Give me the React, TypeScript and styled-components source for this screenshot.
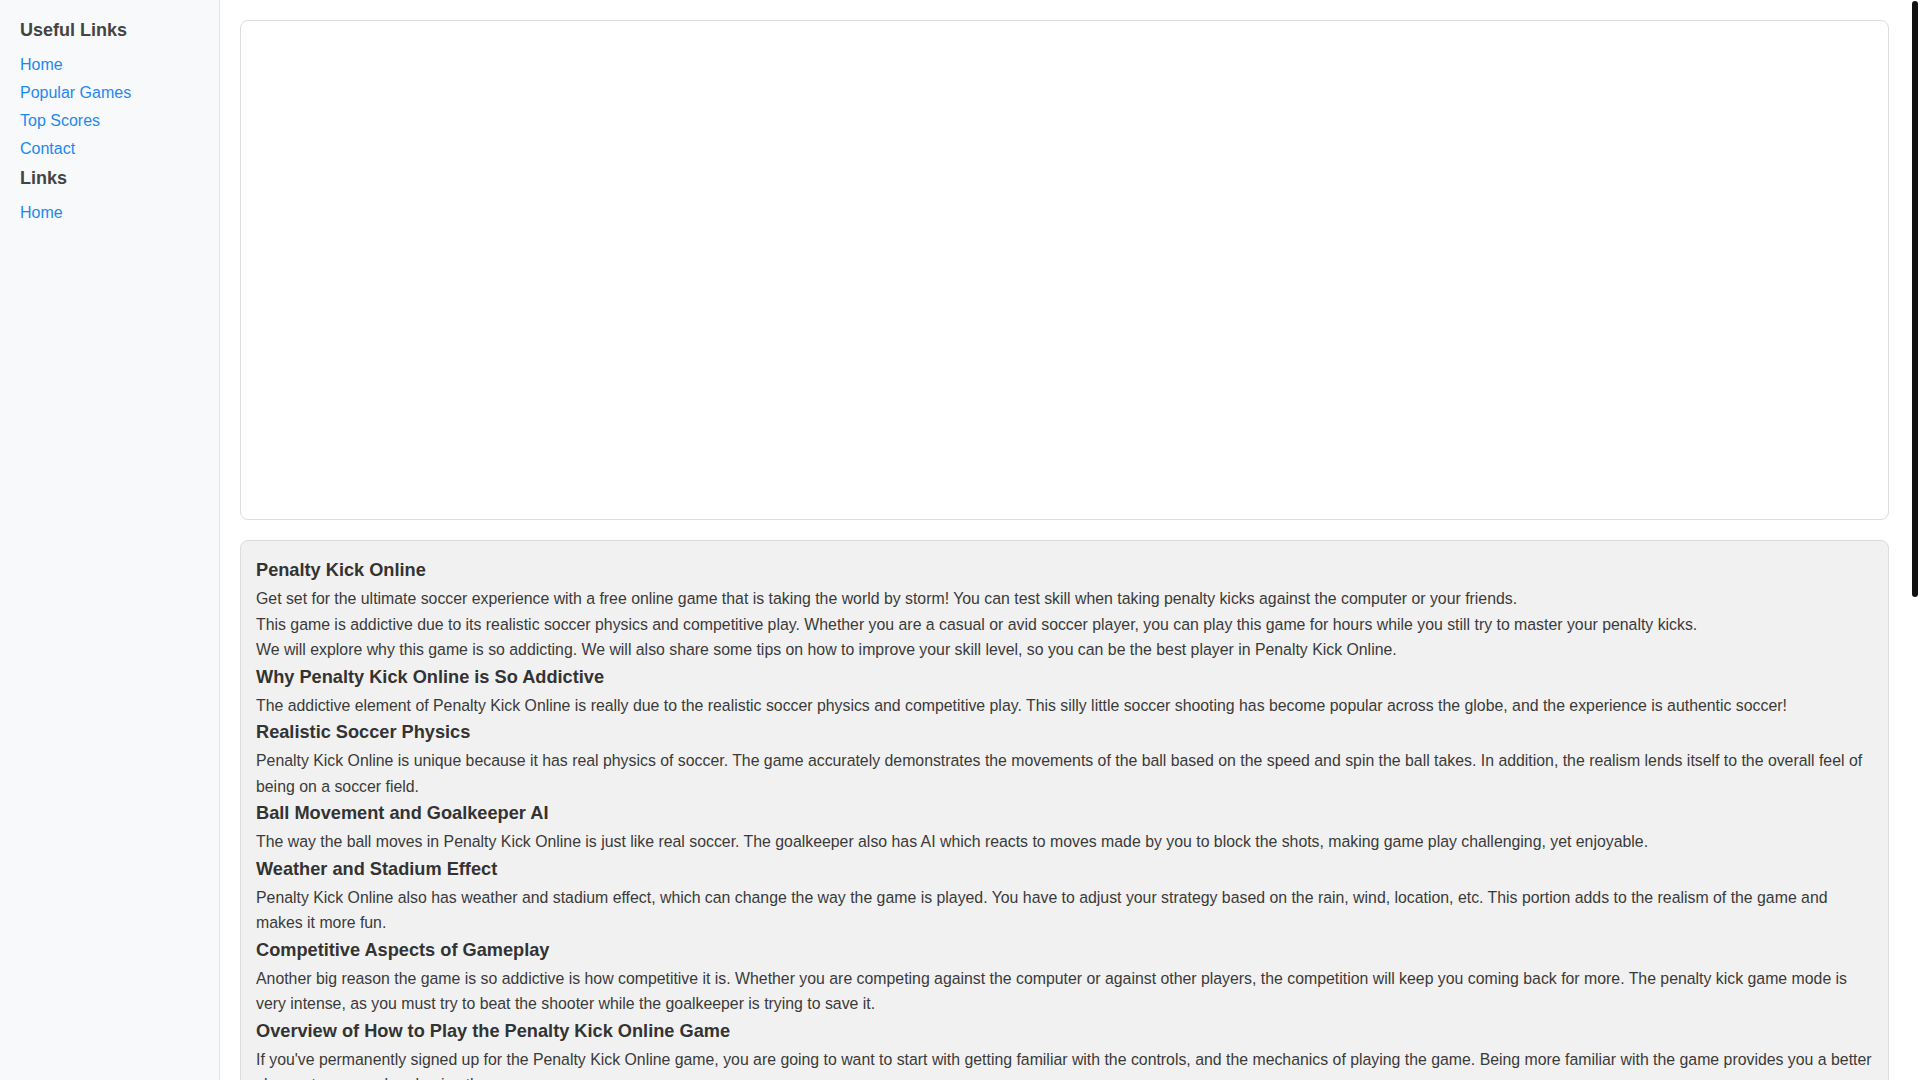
import React from "react";
import styled, { createGlobalStyle } from "styled-components";

const GlobalStyle = createGlobalStyle`
  * { box-sizing: border-box; }
  html, body { margin: 0; padding: 0; }
  body {
    font-family: "Liberation Sans", Arial, Helvetica, sans-serif;
    font-size: 16px;
    line-height: 1.6;
    color: #333;
    background: #fff;
  }
`;

const Layout = styled.div`
  display: flex;
  align-items: stretch;
  min-height: 100vh;
  padding-right: 15px;
`;

const ScrollThumb = styled.div`
  position: fixed;
  top: 1px;
  right: 2px;
  width: 6px;
  height: 596px;
  border-radius: 3px;
  background: #111111;
  z-index: 10;
`;

const Sidebar = styled.aside`
  flex: 0 0 220px;
  width: 220px;
  background: #f8f9fa;
  border-right: 1px solid #e3e3e3;
  padding: 19px 20px 18px;
`;

const SideHeading = styled.h5`
  margin: 0 0 10px;
  font-size: 18px;
  line-height: 22px;
  font-weight: 700;
  color: #444;
`;

const LinkList = styled.ul`
  list-style: none;
  margin: 0 0 4px;
  padding: 0;
`;

const LinkItem = styled.li`
  height: 28px;
  line-height: 28px;
`;

const SideLink = styled.a`
  color: #1e88f0;
  text-decoration: none;
  font-size: 16px;
`;

const Main = styled.main`
  flex: 1;
  min-width: 0;
  padding: 20px 16px 20px 20px;
  display: flex;
  flex-direction: column;
  gap: 20px;
`;

const GameFrame = styled.div`
  height: 500px;
  background: #fff;
  border: 1px solid #dddddd;
  border-radius: 8px;
`;

const ContentCard = styled.section`
  background: #f1f1f1;
  border: 1px solid #dddddd;
  border-radius: 8px;
  padding: 15px;
`;

const Heading = styled.h3`
  margin: 0;
  font-size: 18.2px;
  line-height: 29.9px;
  font-weight: 700;
  color: #333;
`;

const Para = styled.p`
  margin: 0;
  font-size: 15.85px;
  line-height: 25.6px;
  color: #3a3a3a;
`;

type Section = { title: string; paras: string[] };

const sections: Section[] = [
  {
    title: "Penalty Kick Online",
    paras: [
      "Get set for the ultimate soccer experience with a free online game that is taking the world by storm! You can test skill when taking penalty kicks against the computer or your friends.",
      "This game is addictive due to its realistic soccer physics and competitive play. Whether you are a casual or avid soccer player, you can play this game for hours while you still try to master your penalty kicks.",
      "We will explore why this game is so addicting. We will also share some tips on how to improve your skill level, so you can be the best player in Penalty Kick Online.",
    ],
  },
  {
    title: "Why Penalty Kick Online is So Addictive",
    paras: [
      "The addictive element of Penalty Kick Online is really due to the realistic soccer physics and competitive play. This silly little soccer shooting has become popular across the globe, and the experience is authentic soccer!",
    ],
  },
  {
    title: "Realistic Soccer Physics",
    paras: [
      "Penalty Kick Online is unique because it has real physics of soccer. The game accurately demonstrates the movements of the ball based on the speed and spin the ball takes. In addition, the realism lends itself to the overall feel of being on a soccer field.",
    ],
  },
  {
    title: "Ball Movement and Goalkeeper AI",
    paras: [
      "The way the ball moves in Penalty Kick Online is just like real soccer. The goalkeeper also has AI which reacts to moves made by you to block the shots, making game play challenging, yet enjoyable.",
    ],
  },
  {
    title: "Weather and Stadium Effect",
    paras: [
      "Penalty Kick Online also has weather and stadium effect, which can change the way the game is played. You have to adjust your strategy based on the rain, wind, location, etc. This portion adds to the realism of the game and makes it more fun.",
    ],
  },
  {
    title: "Competitive Aspects of Gameplay",
    paras: [
      "Another big reason the game is so addictive is how competitive it is. Whether you are competing against the computer or against other players, the competition will keep you coming back for more. The penalty kick game mode is very intense, as you must try to beat the shooter while the goalkeeper is trying to save it.",
    ],
  },
  {
    title: "Overview of How to Play the Penalty Kick Online Game",
    paras: [
      "If you've permanently signed up for the Penalty Kick Online game, you are going to want to start with getting familiar with the controls, and the mechanics of playing the game. Being more familiar with the game provides you a better chance to succeed and enjoy the game more.",
    ],
  },
  {
    title: "Controls",
    paras: [
      "The controls of Penalty Kick Online are simple to learn. Use your mouse to aim at the part of the goal you want to hit, then click and hold to set the power of your shot. Release the button to kick the ball toward the goal. When you are the goalkeeper, move your mouse in the direction you think the shooter will aim.",
    ],
  },
  {
    title: "Taking a Penalty Kick",
    paras: [
      "When it is your turn to shoot, take a moment to study the goalkeeper before you kick. The power meter rises and falls quickly, so you need good timing to get the shot you want. A shot with too much power can fly over the bar, while a shot with too little power is easy to save. Try to find the right balance between power and accuracy, and aim for the corners of the goal where the goalkeeper has the hardest time reaching the ball.",
    ],
  },
  {
    title: "Playing as the Goalkeeper",
    paras: [
      "Being the goalkeeper is just as important as being the shooter. Watch the movement of the shooter and try to guess where the ball will go. If you dive too early, the shooter can easily place the ball on the other side of the goal. If you dive too late, you will not be able to reach the ball in time. Good goalkeepers learn to read the patterns of their opponents and react at just the right moment to make the save.",
    ],
  },
  {
    title: "Tips to Improve Your Skill Level",
    paras: [
      "Like any sport, getting better at Penalty Kick Online takes practice. Play as many matches as you can against the computer before you challenge your friends, and pay attention to what works and what does not. Below are some simple tips that can help you score more goals, make more saves and climb to the top of the scoreboard in no time at all.",
    ],
  },
  {
    title: "Practice Your Timing",
    paras: [
      "Timing is everything in this game. Practice stopping the power meter at the same point every time, so that you can control exactly how hard you kick the ball. Once your timing is consistent, you can focus on placing your shots.",
    ],
  },
  {
    title: "Watch the Goalkeeper",
    paras: [
      "The computer goalkeeper often leans one way before the kick. Watch closely and aim for the opposite side of the goal. This small detail can be the difference between a goal and a save, especially in the later rounds of a match.",
    ],
  },
  {
    title: "Mix Up Your Shots",
    paras: [
      "If you always shoot to the same corner, your opponent will quickly learn your habit. Change the direction, height and power of your shots so that the goalkeeper never knows what is coming next.",
    ],
  },
  {
    title: "Conclusion",
    paras: [
      "Penalty Kick Online is a fun and exciting soccer game that you can enjoy for free at any time. With its realistic soccer physics, smart goalkeeper AI, weather and stadium effects and competitive gameplay, it is easy to see why so many players around the world keep coming back for more. Whether you want a quick game during a break or a long session against your friends, this game has something for everyone.",
      "Now that you know how the game works and have some tips to improve your skill level, it is time to step up to the penalty spot. Aim carefully, time your kick and show everyone that you have what it takes to become the best player in Penalty Kick Online. Good luck, and have fun scoring goals!",
    ],
  },
];

const usefulLinks = ["Home", "Popular Games", "Top Scores", "Contact"];
const otherLinks = ["Home"];

export default function App() {
  return (
    <>
      <GlobalStyle />
      <ScrollThumb aria-hidden="true" />
      <Layout>
        <Sidebar>
          <SideHeading>Useful Links</SideHeading>
          <LinkList>
            {usefulLinks.map((l) => (
              <LinkItem key={l}>
                <SideLink href="#">{l}</SideLink>
              </LinkItem>
            ))}
          </LinkList>
          <SideHeading>Links</SideHeading>
          <LinkList>
            {otherLinks.map((l) => (
              <LinkItem key={l}>
                <SideLink href="#">{l}</SideLink>
              </LinkItem>
            ))}
          </LinkList>
        </Sidebar>
        <Main>
          <GameFrame />
          <ContentCard>
            {sections.map((s) => (
              <React.Fragment key={s.title}>
                <Heading>{s.title}</Heading>
                {s.paras.map((p, i) => (
                  <Para key={i}>{p}</Para>
                ))}
              </React.Fragment>
            ))}
          </ContentCard>
        </Main>
      </Layout>
    </>
  );
}
